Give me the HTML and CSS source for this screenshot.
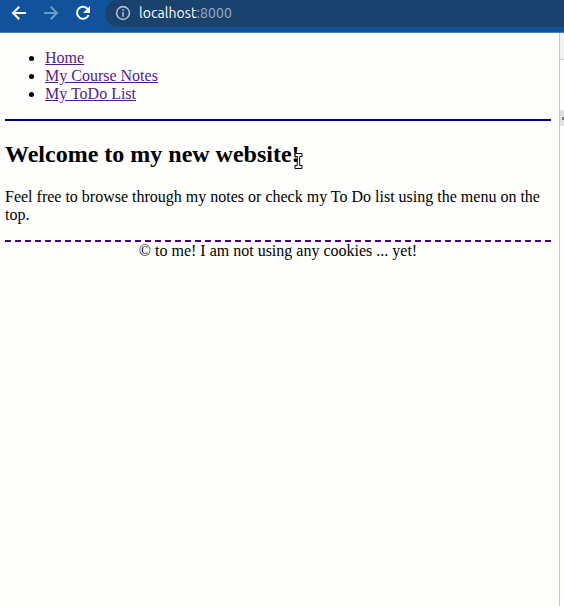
FILE: index.html
```html
<!DOCTYPE html>
<html lang="en">
<head>
<meta charset="utf-8">
<title>My website</title>
<link rel="stylesheet" href="styles.css">
</head>
<body>
<div class="toolbar">
  <svg class="icons" width="105" height="32" viewBox="0 0 105 32" fill="none" stroke-width="2">
    <path class="active" d="M26 13H13.5M19.3 6.8L13 13l6.3 6.2"/>
    <path class="muted" d="M44 13h12.5M50.7 6.8L57 13l-6.3 6.2"/>
    <path class="active" d="M88 9.4A6 6 0 1 0 88.6 15"/>
    <path class="fill" d="M90 6v7h-7z"/>
  </svg>
  <div class="address">
    <svg class="info" width="16" height="16" viewBox="0 0 16 16" fill="none" stroke-width="1.6">
      <circle cx="8" cy="8" r="6.4"/>
      <path d="M8 7v4.7M8 4.2v1.7"/>
    </svg>
    <span class="url">localhost<span class="port">:8000</span></span>
  </div>
</div>
<div class="window">
  <div class="page">
    <nav>
      <ul>
        <li><a href="#">Home</a></li>
        <li><a href="#">My Course Notes</a></li>
        <li><a href="#">My ToDo List</a></li>
      </ul>
    </nav>
    <h2>Welcome to my new website!<svg class="cursor" width="9" height="16" viewBox="0 0 9 16">
      <path d="M1 .5h7v3H5.7v9H8v3H1v-3h2.3v-9H1z"/>
    </svg></h2>
    <p>Feel free to browse through my notes or check my To Do list using the menu on the top.</p>
    <footer>© to me! I am not using any cookies ... yet!</footer>
  </div>
  <aside class="panel">
    <div class="panel-head"></div>
    <div class="panel-toggle"></div>
  </aside>
</div>
</body>
</html>
```
FILE: styles.css
```css
body {
  margin: 0;
  height: 606px;
  overflow: hidden;
  display: flex;
  flex-direction: column;
  background: #fefefd;
  color: #000;
  font: 16px/18px "Liberation Serif", "Times New Roman", serif;
}

.toolbar {
  box-sizing: border-box;
  height: 33px;
  flex: none;
  display: flex;
  background: #12529a;
  border-bottom: 1px solid #4380b8;
}

.icons { flex: none; }
.active { stroke: #fff; }
.muted { stroke: #6c9cc9; }
.fill { fill: #fff; }

.address {
  flex: 1;
  height: 27px;
  box-sizing: border-box;
  padding: 0 0 1px 10px;
  display: flex;
  align-items: center;
  gap: 8px;
  background: #19426f;
  border-radius: 14px 0 0 14px;
}

.info { stroke: #aebccb; }

.url {
  color: #fff;
  font: 14px/20px Ubuntu, "Noto Sans", sans-serif;
  letter-spacing: 0.07px;
}

.port { color: #9db1c7; }

.window {
  flex: 1;
  display: flex;
}

.page {
  flex: 1;
  padding: 0 8px 0 5px;
}

nav { border-bottom: 2px solid #000080; }

ul {
  margin: 16px 0;
  padding-left: 40px;
}

a { color: #551a8b; }

h2 {
  position: relative;
  margin: 20px 0;
  font-size: 24px;
  line-height: 27px;
}

.cursor {
  position: absolute;
  left: 289px;
  top: 12px;
  fill: #fff;
  stroke: #000;
  stroke-width: 1;
}

p { margin: 0 0 16px; }

footer {
  border-top: 2px dashed #4b0082;
  text-align: center;
}

.panel {
  width: 4px;
  border-left: 1px solid #c5c5c5;
}

.panel-head {
  height: 26px;
  background: #f1f2f1;
  border-bottom: 1px solid #c9cbcd;
}

.panel-toggle {
  height: 16px;
  margin-top: 50px;
  background: linear-gradient(#777, #777) 2px 7px / 2px 3px no-repeat #e2e2e2;
}
```
